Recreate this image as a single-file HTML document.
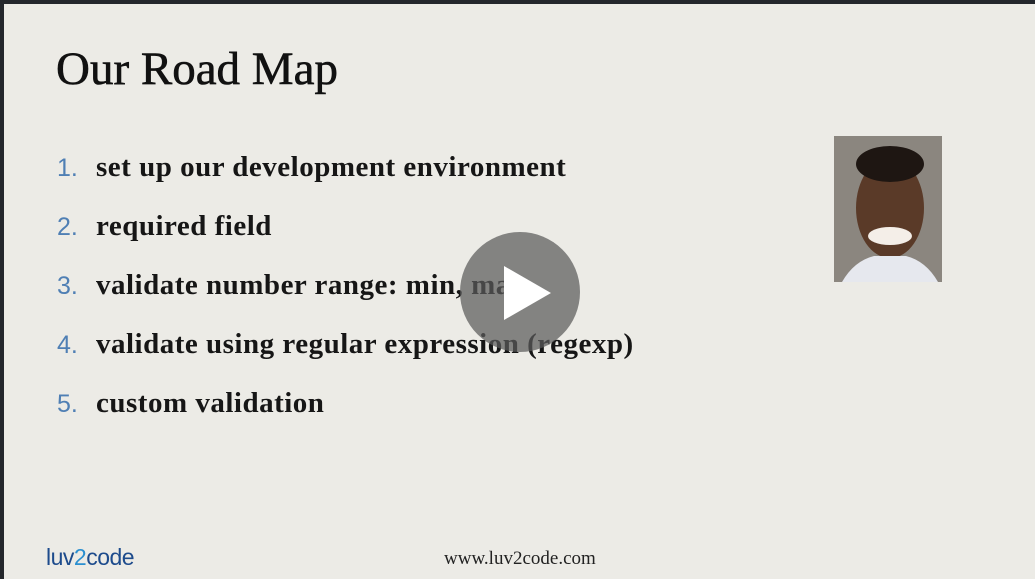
<!DOCTYPE html>
<html><head><style>
body{margin:0;width:1035px;height:579px;background:#24272c;overflow:hidden;position:relative}
.slide{position:absolute;left:4px;top:4px;width:1031px;height:575px;background:#ecebe6;font-family:"Liberation Serif",serif}
h1{position:absolute;left:52px;top:38px;margin:0;font-size:47px;font-weight:normal;color:#111;letter-spacing:0px;-webkit-text-stroke:0.6px #111}
.it{position:absolute;left:53px;font-size:29px;font-weight:bold;color:#161616;white-space:nowrap;letter-spacing:0.5px}
.it span{font-family:"Liberation Sans",sans-serif;font-weight:normal;color:#4f7fb4;font-size:25px;display:inline-block;width:39px;letter-spacing:0}
.photo{position:absolute;left:830px;top:132px;width:108px;height:146px;background:#8a857d;overflow:hidden}
.url{position:absolute;left:440px;top:544px;font-size:19px;color:#222}
.logo{position:absolute;left:42px;top:540px;font-family:"Liberation Sans",sans-serif;font-size:23px;color:#1d4b8c;letter-spacing:-0.5px}
</style></head><body>
<div class="slide">
<h1>Our Road Map</h1>
<div class="it" style="top:147px"><span>1.</span>set up our development environment</div>
<div class="it" style="top:206px"><span>2.</span>required field</div>
<div class="it" style="top:265px"><span>3.</span>validate number range: min, max</div>
<div class="it" style="top:324px"><span>4.</span>validate using regular expression (regexp)</div>
<div class="it" style="top:383px"><span>5.</span>custom validation</div>
<div class="photo"><svg width="108" height="146">
<rect width="108" height="146" fill="#8b867f"/>
<ellipse cx="56" cy="72" rx="34" ry="50" fill="#5a3a28"/>
<ellipse cx="56" cy="28" rx="34" ry="18" fill="#1e1612"/>
<ellipse cx="56" cy="100" rx="22" ry="9" fill="#f4eee8"/>
<path d="M8 146 Q20 125 40 120 L72 120 Q92 125 104 146Z" fill="#e6e8ee"/>
</svg></div>
<div class="logo">luv<span style="color:#2a8fd0">2</span>code</div>
<div class="url">www.luv2code.com</div>
</div>
<svg style="position:absolute;left:460px;top:232px" width="120" height="120">
<circle cx="60" cy="60" r="60" fill="rgba(90,90,90,0.72)"/>
<path d="M44 34 L44 88 L91 61Z" fill="#fff"/>
</svg>
</body></html>
